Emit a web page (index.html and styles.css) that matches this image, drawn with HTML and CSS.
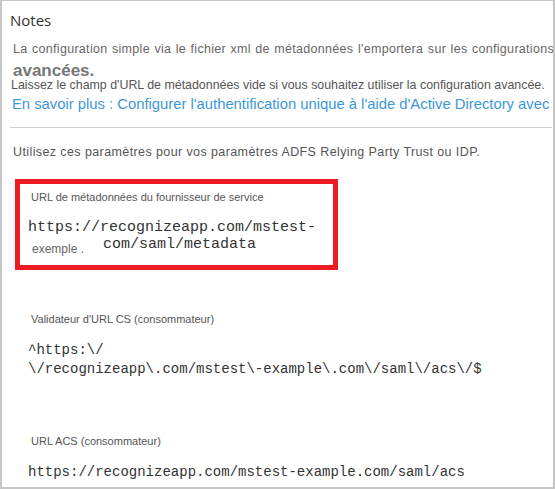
FILE: index.html
```html
<!DOCTYPE html>
<html lang="fr">
<head>
<meta charset="utf-8">
<link rel="stylesheet" href="styles.css">
</head>
<body>
<div class="panel">
  <h1 class="title">Notes</h1>
  <p class="note note--justify">La configuration simple via le fichier xml de métadonnées l'emportera sur les configurations</p>
  <p class="note-big">avancées.</p>
  <p class="hint">Laissez le champ d'URL de métadonnées vide si vous souhaitez utiliser la configuration avancée.</p>
  <a class="link">En savoir plus : Configurer l'authentification unique à l'aide d'Active Directory avec</a>
  <hr class="rule">
  <p class="note intro">Utilisez ces paramètres pour vos paramètres ADFS Relying Party Trust ou IDP.</p>
  <div class="fields">
    <div class="field field--highlight">
      <div class="label">URL de métadonnées du fournisseur de service</div>
      <div class="mono mono--large">https://recognizeapp.com/mstest-</div>
      <div class="row">
        <span class="exemple">exemple .</span>
        <span class="mono mono--large">com/saml/metadata</span>
      </div>
    </div>
    <div class="field">
      <div class="label">Validateur d'URL CS (consommateur)</div>
      <div class="mono">^https:\/</div>
      <div class="mono">\/recognizeapp\.com/mstest\-example\.com\/saml\/acs\/$</div>
    </div>
    <div class="field">
      <div class="label">URL ACS (consommateur)</div>
      <div class="mono">https://recognizeapp.com/mstest-example.com/saml/acs</div>
    </div>
  </div>
</div>
</body>
</html>
```

FILE: styles.css
```css
* { box-sizing: border-box; }
html, body { margin: 0; padding: 0; background: #fff; }
body { font-family: "Liberation Sans", Arial, sans-serif; }

.panel {
  width: 555px;
  height: 489px;
  border-style: solid;
  border-color: #c6c6c6;
  border-width: 1px 2px 2px 2px;
  padding: 0 1px 0 8px;
  overflow: hidden;
}

.title {
  margin: 9px 0 0 0;
  font-family: "Open Sans", sans-serif;
  font-weight: 400;
  font-size: 15px;
  line-height: 20px;
  color: #333;
}

.note {
  margin: 11px 0 0 3px;
  font-size: 12.5px;
  line-height: 16px;
  color: #666;
  letter-spacing: 0.4px;
  white-space: nowrap;
}
.note--justify {
  width: 541px;
  white-space: normal;
  text-align: justify;
  text-align-last: justify;
  letter-spacing: 0.3px;
}

.note-big {
  margin: 7px 0 0 3px;
  font-size: 17px;
  font-weight: 700;
  line-height: 14px;
  color: #777;
}

.hint {
  margin: 1px 0 0 1px;
  font-size: 12.4px;
  line-height: 12px;
  color: #555;
  white-space: nowrap;
}

.link {
  display: block;
  margin: 4px 0 0 2px;
  font-size: 14.8px;
  line-height: 18px;
  color: #3b98db;
  white-space: nowrap;
}

.rule {
  margin: 14px 0 0 0;
  border: 0;
  height: 1px;
  background: #cfcfcf;
}

.intro { margin-top: 16px; color: #555; }

.fields {
  margin: 19px 0 0 5px;
  display: flex;
  flex-direction: column;
  gap: 31px;
}

.field {
  width: 323px;
  min-height: 91px;
  border: 5px solid transparent;
  padding: 6px 8px 7px 8px;
}
.field--highlight { border-color: #ed1c24; }

.label {
  padding-left: 3px;
  font-size: 11px;
  line-height: 14px;
  color: #555;
  margin-bottom: 15px;
  white-space: nowrap;
}

.mono {
  font-family: "Liberation Mono", "Courier New", monospace;
  font-size: 14px;
  line-height: 19px;
  color: #333;
  white-space: nowrap;
}
.mono--large {
  font-size: 15px;
  line-height: 17px;
}

.row {
  display: flex;
  align-items: flex-start;
}
.exemple {
  width: 75px;
  padding: 5px 0 0 4px;
  font-size: 12px;
  line-height: 17px;
  color: #666;
}
```
